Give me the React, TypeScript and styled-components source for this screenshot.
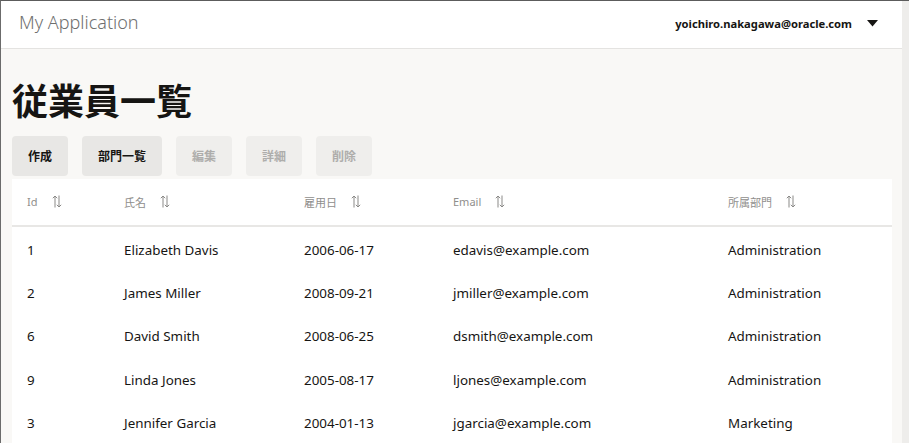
import React from 'react';
import styled, { createGlobalStyle } from 'styled-components';

const GlobalStyle = createGlobalStyle`
	html, body {
		margin: 0;
		padding: 0;
		background: #ffffff;
	}
	body {
		font-family: 'Noto Sans', 'Noto Sans CJK JP', sans-serif;
		color: #161513;
	}
	* {
		box-sizing: border-box;
	}
`;

const Frame = styled.div`
	display: flex;
	width: 909px;
	height: 443px;
	overflow: hidden;
	border-top: 1px solid #5c5c5c;
	border-left: 1px solid #6b6b6b;
`;

const Page = styled.div`
	flex: 1;
	display: flex;
	flex-direction: column;
	background: #f9f8f6;
`;

const ScrollTrack = styled.div`
	width: 7px;
	background: #eeedeb;
`;

const Header = styled.header`
	display: flex;
	align-items: center;
	justify-content: space-between;
	height: 48px;
	padding: 0 24px 0 18px;
	background: #ffffff;
	border-bottom: 1px solid #e4e3e1;
`;

const AppTitle = styled.span`
	font-size: 18px;
	font-weight: 300;
	color: #6f6f6f;
	padding-bottom: 4px;
`;

const UserMenu = styled.div`
	display: flex;
	align-items: center;
	gap: 15px;
	font-size: 11.2px;
	font-weight: 700;
	color: #161513;
	padding-bottom: 1px;
`;

const Main = styled.main`
	display: flex;
	flex-direction: column;
	padding: 0 10px 0 11px;
`;

const PageTitle = styled.h1`
	margin: 25px 0 0 0;
	font-family: 'Noto Sans CJK JP', sans-serif;
	font-size: 36px;
	font-weight: 700;
	line-height: 50px;
	color: #161513;
`;

const Toolbar = styled.div`
	display: flex;
	gap: 14px;
	margin-top: 12px;
	margin-bottom: 3px;
`;

const ActionButton = styled.button<{ $disabled?: boolean }>`
	height: 40px;
	padding: 0 16px;
	border: none;
	border-radius: 4px;
	font-family: 'Noto Sans CJK JP', sans-serif;
	font-size: 12px;
	font-weight: 700;
	background: ${({ $disabled }) => ($disabled ? '#efeeec' : '#e8e7e5')};
	color: ${({ $disabled }) => ($disabled ? '#aeadab' : '#161513')};
	cursor: ${({ $disabled }) => ($disabled ? 'default' : 'pointer')};
`;

const Table = styled.div`
	background: #ffffff;
`;

const columns = '97px 180px 149px 275px 1fr';

const HeadRow = styled.div`
	display: grid;
	grid-template-columns: ${columns};
	height: 48px;
	align-items: center;
	border-bottom: 2px solid #e8e7e5;
`;

const HeadCell = styled.div`
	display: flex;
	align-items: center;
	padding-left: 15px;
	font-size: 11px;
	color: #8f8e8c;
`;

const SortIcon = styled.svg<{ $gap: number }>`
	width: 10px;
	height: 13px;
	margin-left: ${({ $gap }) => $gap}px;
	color: #8a8987;
`;

const BodyRow = styled.div`
	display: grid;
	grid-template-columns: ${columns};
	height: 43.3px;
	align-items: center;
	padding-top: 3px;
`;

const BodyCell = styled.div`
	padding-left: 15px;
	font-size: 13.4px;
	color: #161513;
	white-space: nowrap;
`;

function Caret() {
	return (
		<svg width="11" height="7" viewBox="0 0 11 7">
			<path d="M0 0 H11 L5.5 6.5 Z" fill="#161513" />
		</svg>
	);
}

function Sort({ gap }: { gap: number }) {
	return (
		<SortIcon $gap={gap} viewBox="0 0 10 13">
			<path
				d="M3 12.5 V1 M0.8 3.2 L3 1 L5.2 3.2 M7 0.5 V12 M4.8 9.8 L7 12 L9.2 9.8"
				stroke="currentColor"
				strokeWidth="1"
				fill="none"
			/>
		</SortIcon>
	);
}

const headers = [
	{ label: 'Id', gap: 14 },
	{ label: '氏名', gap: 14 },
	{ label: '雇用日', gap: 14 },
	{ label: 'Email', gap: 14 },
	{ label: '所属部門', gap: 14 },
];

const employees = [
	{ id: 1, name: 'Elizabeth Davis', hired: '2006-06-17', email: 'edavis@example.com', dept: 'Administration' },
	{ id: 2, name: 'James Miller', hired: '2008-09-21', email: 'jmiller@example.com', dept: 'Administration' },
	{ id: 6, name: 'David Smith', hired: '2008-06-25', email: 'dsmith@example.com', dept: 'Administration' },
	{ id: 9, name: 'Linda Jones', hired: '2005-08-17', email: 'ljones@example.com', dept: 'Administration' },
	{ id: 3, name: 'Jennifer Garcia', hired: '2004-01-13', email: 'jgarcia@example.com', dept: 'Marketing' },
];

const actions = [
	{ label: '作成', disabled: false },
	{ label: '部門一覧', disabled: false },
	{ label: '編集', disabled: true },
	{ label: '詳細', disabled: true },
	{ label: '削除', disabled: true },
];

function App(): JSX.Element {
	return (
		<>
			<GlobalStyle />
			<Frame>
				<Page>
					<Header>
						<AppTitle>My Application</AppTitle>
						<UserMenu>
							<span>yoichiro.nakagawa@oracle.com</span>
							<Caret />
						</UserMenu>
					</Header>
					<Main>
						<PageTitle>従業員一覧</PageTitle>
						<Toolbar>
							{actions.map(action => (
								<ActionButton key={action.label} $disabled={action.disabled}>
									{action.label}
								</ActionButton>
							))}
						</Toolbar>
						<Table>
							<HeadRow>
								{headers.map(header => (
									<HeadCell key={header.label}>
										{header.label}
										<Sort gap={header.gap} />
									</HeadCell>
								))}
							</HeadRow>
							{employees.map(employee => (
								<BodyRow key={employee.id}>
									<BodyCell>{employee.id}</BodyCell>
									<BodyCell>{employee.name}</BodyCell>
									<BodyCell>{employee.hired}</BodyCell>
									<BodyCell>{employee.email}</BodyCell>
									<BodyCell>{employee.dept}</BodyCell>
								</BodyRow>
							))}
						</Table>
					</Main>
				</Page>
				<ScrollTrack />
			</Frame>
		</>
	);
}

export default App;
